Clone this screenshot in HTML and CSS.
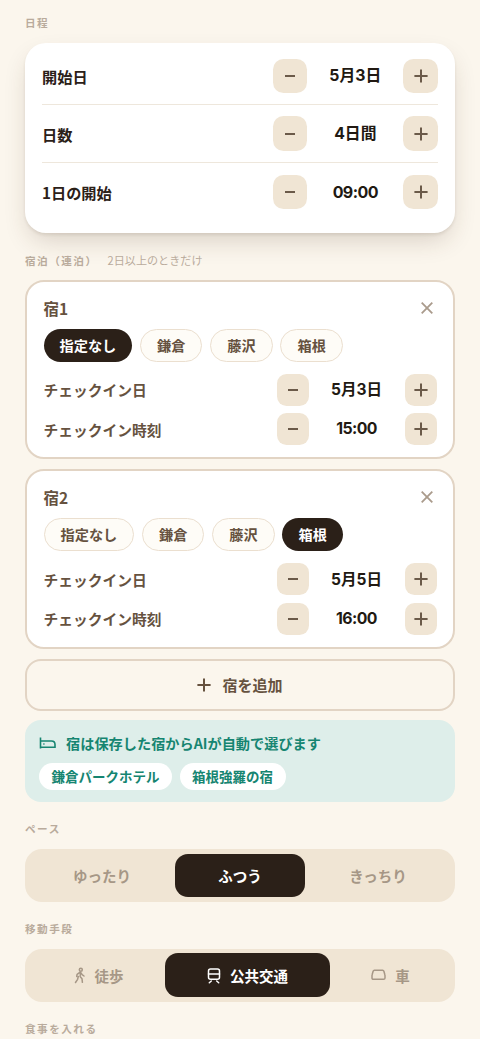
FILE: index.html
```html
<!DOCTYPE html>
<html lang="ja">
<head>
<meta charset="utf-8">
<meta name="viewport" content="width=device-width, initial-scale=1">
<title>日程</title>
<link rel="stylesheet" href="styles.css">
</head>
<body>
<svg class="defs" aria-hidden="true">
  <symbol id="plus" viewBox="0 0 14 14"><path d="M7 .4v13.200M.4 7h13.200"/></symbol>
  <symbol id="minus" viewBox="0 0 14 14"><path d="M2 7h10"/></symbol>
  <symbol id="close" viewBox="0 0 12 12"><path d="M.7 .7l10.600 10.600M11.300 .7L.7 11.300"/></symbol>
</svg>
<main class="page">
  <h2 class="label">日程</h2>
  <section class="card schedule">
    <div class="row"><span>開始日</span><div class="stepper"><button><svg><use href="#minus"/></svg></button><b class="value">5月3日</b><button><svg><use href="#plus"/></svg></button></div></div>
    <div class="row"><span>日数</span><div class="stepper"><button><svg><use href="#minus"/></svg></button><b class="value">4日間</b><button><svg><use href="#plus"/></svg></button></div></div>
    <div class="row"><span>1日の開始</span><div class="stepper"><button><svg><use href="#minus"/></svg></button><b class="value time">09:00</b><button><svg><use href="#plus"/></svg></button></div></div>
  </section>

  <h2 class="label stays-label">宿泊（連泊）<small>2日以上のときだけ</small></h2>
  <section class="stay">
    <div class="stay-head"><h3>宿1</h3><svg class="close"><use href="#close"/></svg></div>
    <div class="chips"><span class="chip active">指定なし</span><span class="chip">鎌倉</span><span class="chip">藤沢</span><span class="chip">箱根</span></div>
    <div class="stay-row"><span>チェックイン日</span><div class="stepper small"><button><svg><use href="#minus"/></svg></button><b class="value">5月3日</b><button><svg><use href="#plus"/></svg></button></div></div>
    <div class="stay-row"><span>チェックイン時刻</span><div class="stepper small"><button><svg><use href="#minus"/></svg></button><b class="value time">15:00</b><button><svg><use href="#plus"/></svg></button></div></div>
  </section>
  <section class="stay">
    <div class="stay-head"><h3>宿2</h3><svg class="close"><use href="#close"/></svg></div>
    <div class="chips"><span class="chip">指定なし</span><span class="chip">鎌倉</span><span class="chip">藤沢</span><span class="chip active">箱根</span></div>
    <div class="stay-row"><span>チェックイン日</span><div class="stepper small"><button><svg><use href="#minus"/></svg></button><b class="value">5月5日</b><button><svg><use href="#plus"/></svg></button></div></div>
    <div class="stay-row"><span>チェックイン時刻</span><div class="stepper small"><button><svg><use href="#minus"/></svg></button><b class="value time">16:00</b><button><svg><use href="#plus"/></svg></button></div></div>
  </section>
  <button class="add"><svg><use href="#plus"/></svg><span>宿を追加</span></button>

  <section class="notice">
    <div class="notice-title">
      <svg viewBox="0 0 18 14"><path d="M1.500 1.500v11M1.500 11.200H16V8.500Q16 5 12.500 5H1.500M4.300 8h1.200"/></svg>
      <span>宿は保存した宿からAIが自動で選びます</span>
    </div>
    <div class="saved"><span>鎌倉パークホテル</span><span>箱根強羅の宿</span></div>
  </section>

  <h2 class="label pace-label">ペース</h2>
  <div class="segments pace"><span>ゆったり</span><span class="active">ふつう</span><span>きっちり</span></div>

  <h2 class="label transit-label">移動手段</h2>
  <div class="segments transit">
    <span><svg class="walk" viewBox="0 0 12 17"><circle cx="6.800" cy="2.700" r="1.500"/><path d="M5.800 5.300L3.100 7.300 2.700 9.500M6.500 5.500L6.100 9.500 8 11.700 8.400 15.300M4.300 9.600L3.600 12.300 1.500 15.500M7 5.800L8.100 7.700 10 9"/></svg>徒歩</span>
    <span class="active"><svg class="train" viewBox="0 0 14 17"><rect x="1.500" y="2" width="11" height="10.200" rx="2"/><path d="M1.500 7h11M4.300 14L2.300 15.800M9.700 14l2 1.800"/></svg>公共交通</span>
    <span><svg class="car" viewBox="0 0 15 12"><path d="M3.400 1.200h8.200q1 0 1.300 1l.9 3.300q.2.600.2 1.200v2.200q0 1.400-1.400 1.400H2.400Q1 10.300 1 8.900V6.700q0-.6.200-1.200l.9-3.300q.3-1 1.300-1z"/></svg>車</span>
  </div>
  <h2 class="label meals-label">食事を入れる</h2>
</main>
</body>
</html>
```
FILE: styles.css
```css
* { box-sizing: border-box; }
html { overflow: hidden; }
body {
  margin: 0;
  height: 1039px;
  overflow: hidden;
  background: #fbf6ed;
  color: #2b2018;
  font-family: "Noto Sans CJK JP", sans-serif;
  font-weight: 700;
}
h2, h3 { margin: 0; }
svg { fill: none; stroke: currentColor; stroke-width: 2; flex: none; }
.defs { display: none; }
button { border: 0; padding: 0; font: inherit; color: inherit; }
.page { padding: 14px 25px 0; }
.label {
  height: 18px;
  line-height: 18px;
  font-size: 10.6px;
  font-weight: 700;
  letter-spacing: 1.500px;
  color: #b9ab9c;
  white-space: nowrap;
}
.label small { margin-left: 10px; font-size: 11.100px; font-weight: 400; letter-spacing: 0; }
.card {
  height: 190px;
  margin-top: 10.500px;
  padding: 5px 17px;
  border-radius: 21px;
  background: #fff;
  box-shadow: 0 2px 3px rgba(70, 45, 25, .09), 0 11px 26px -5px rgba(70, 45, 25, .2);
}
.row {
  height: 57.800px;
  display: flex;
  align-items: center;
  justify-content: space-between;
  border-bottom: 1px solid #eee7dc;
  font-size: 15.200px;
}
.row:last-child { border-bottom: 0; }
.stepper { display: flex; align-items: center; }
.stepper button {
  width: 34.700px;
  height: 34.700px;
  border-radius: 10.500px;
  display: grid;
  place-items: center;
  background: #f0e5d4;
  color: #6b5a49;
}
.stepper svg { width: 14px; height: 14px; }
.value {
  width: 96px;
  text-align: center;
  font-family: Inter, "Noto Sans CJK JP", sans-serif;
  font-size: 15.800px;
  font-weight: 700;
  line-height: 24px;
  padding-top: 1px;
  color: #211912;
}
.value.time { padding-top: 0; font-size: 16px; letter-spacing: -.55px; }
.stays-label { margin-top: 18px; }
.stay {
  height: 179.500px;
  margin-top: 10px;
  padding: 14px 16.500px 0;
  border: 2px solid #e2d4c4;
  border-radius: 19px;
  background: #fff;
  color: #66523f;
}
.stays-label + .stay { margin-top: 11px; }
.stay-head { height: 24px; display: flex; align-items: center; justify-content: space-between; padding-right: 3.500px; }
.stay h3 { font-size: 15.500px; line-height: 24px; }
.close { width: 12px; height: 12px; color: #aa9b8c; stroke-width: 1.8; }
.chips { display: flex; gap: 7.800px; margin-top: 9px; }
.chip {
  height: 33px;
  padding: 0 16px;
  border: 1.200px solid #ebdfcf;
  border-radius: 17px;
  background: #fefcf7;
  font-size: 14.200px;
  line-height: 31px;
}
.chip.active { border: 0; line-height: 33px; background: #2b2018; color: #fff; }
.stay-row { height: 32px; margin-top: 7.500px; display: flex; align-items: center; justify-content: space-between; font-size: 14.750px; }
.chips + .stay-row { margin-top: 12.300px; }
.small button { width: 32px; height: 32px; border-radius: 9.500px; }
.small .value { font-size: 15.500px; }
.small .value.time { font-size: 15.800px; }
.add {
  width: 100%;
  height: 52px;
  margin-top: 10px;
  display: flex;
  align-items: center;
  justify-content: center;
  gap: 11px;
  border: 2px solid #e2d4c4;
  border-radius: 16px;
  background: transparent;
  color: #66523f;
  font-size: 15px;
}
.add svg { width: 14px; height: 14px; }
.notice { height: 82px; margin-top: 9.700px; padding: 12px 14px; border-radius: 16px; background: #deeeea; color: #168571; }
.notice-title { height: 22px; display: flex; align-items: center; gap: 9px; font-size: 14.200px; white-space: nowrap; }
.notice-title svg { width: 18px; height: 14px; stroke-width: 1.6; }
.saved { display: flex; gap: 7.500px; margin-top: 8.500px; }
.saved span { height: 27.500px; padding: 0 12.500px; border-radius: 14px; background: #fff; font-size: 13.500px; line-height: 27px; }
.pace-label { margin-top: 17.800px; }
.segments { height: 53px; margin-top: 10.800px; display: flex; align-items: center; border-radius: 17px; background: #f0e5d4; color: #a69786; font-size: 14.500px; }
.segments span { height: 43.500px; display: flex; align-items: center; justify-content: center; border-radius: 13px; white-space: nowrap; }
.segments .active { background: #2b2018; color: #fff; }
.pace { justify-content: center; gap: 7.500px; }
.pace span { width: 130.500px; }
.transit { padding-left: 15px; gap: 8px; }
.transit span { width: 117px; gap: 9px; }
.transit .active { width: 165px; }
.transit span:last-child { width: 105px; }
.transit svg { stroke-width: 1.5; stroke-linecap: round; stroke-linejoin: round; }
.walk { width: 12px; height: 17px; }
.train { width: 14px; height: 17px; }
.car { width: 15px; height: 12px; }
.transit-label { margin-top: 18px; }
.meals-label { margin-top: 18px; }
```
